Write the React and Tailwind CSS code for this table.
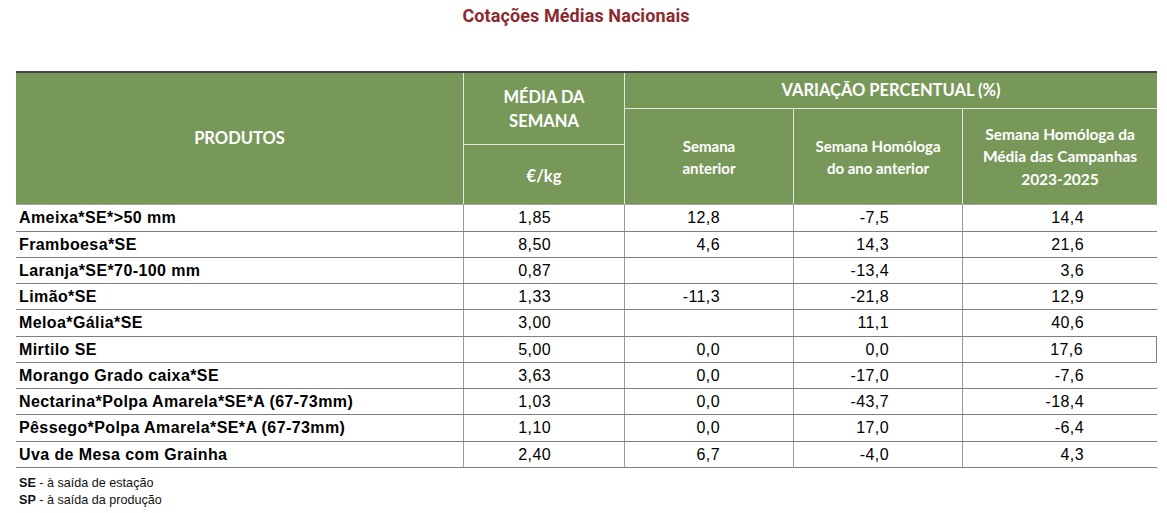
import React from 'react';

const GRID = 'grid grid-cols-[447px_161px_169px_169px_195px]';

const LINHAS = [
  { nome: 'Ameixa*SE*>50 mm', media: '1,85', ant: '12,8', hom: '-7,5', camp: '14,4', alto: true },
  { nome: 'Framboesa*SE', media: '8,50', ant: '4,6', hom: '14,3', camp: '21,6' },
  { nome: 'Laranja*SE*70-100 mm', media: '0,87', ant: '', hom: '-13,4', camp: '3,6' },
  { nome: 'Limão*SE', media: '1,33', ant: '-11,3', hom: '-21,8', camp: '12,9' },
  { nome: 'Meloa*Gália*SE', media: '3,00', ant: '', hom: '11,1', camp: '40,6', alto: true },
  { nome: 'Mirtilo SE', media: '5,00', ant: '0,0', hom: '0,0', camp: '17,6', caixa: true },
  { nome: 'Morango Grado caixa*SE', media: '3,63', ant: '0,0', hom: '-17,0', camp: '-7,6' },
  { nome: 'Nectarina*Polpa Amarela*SE*A (67-73mm)', media: '1,03', ant: '0,0', hom: '-43,7', camp: '-18,4' },
  { nome: 'Pêssego*Polpa Amarela*SE*A (67-73mm)', media: '1,10', ant: '0,0', hom: '17,0', camp: '-6,4', alto: true },
  { nome: 'Uva de Mesa com Grainha', media: '2,40', ant: '6,7', hom: '-4,0', camp: '4,3' },
];

function Num({ children, last, caixa }) {
  return (
    <div className={`flex items-center justify-end pr-[73px] border-l border-[#9a9a9a] text-[16px] tracking-[0.4px] text-black ${last && caixa ? 'border-r border-r-[#7f7f7f]' : ''}`}>
      {children}
    </div>
  );
}

function Cabecalho() {
  return (
    <div className={`${GRID} grid-rows-[35px_36px_60px] bg-[#78985a] border-t-2 border-[#454545] text-white font-bold`}
      style={{ fontFamily: 'Lato, "Open Sans", sans-serif' }}>
      <div className="row-span-3 flex items-center justify-center text-[16.5px]">PRODUTOS</div>
      <div className="row-span-2 flex items-center justify-center text-center text-[16.5px] leading-[24px] border-l border-[#e3e9dc]">
        MÉDIA DA<br />SEMANA
      </div>
      <div className="col-span-3 flex items-center justify-center text-[16.5px] border-l border-[#e3e9dc]">
        VARIAÇÃO PERCENTUAL (%)
      </div>
      <div className="row-span-2 flex items-center justify-center text-center text-[15px] leading-[22px] border-l border-t border-[#e3e9dc]">
        Semana<br />anterior
      </div>
      <div className="row-span-2 flex items-center justify-center text-center text-[15px] leading-[22px] border-l border-t border-[#e3e9dc]">
        Semana Homóloga<br />do ano anterior
      </div>
      <div className="row-span-2 flex items-center justify-center text-center text-[15.5px] leading-[22.5px] border-l border-t border-[#e3e9dc]">
        Semana Homóloga da<br />Média das Campanhas<br />2023-2025
      </div>
      <div className="col-start-2 row-start-3 flex items-center justify-center pt-[4px] text-[16.5px] border-l border-t border-[#e3e9dc]">
        €/kg
      </div>
    </div>
  );
}

export default function App() {
  return (
    <div className="w-[1167px] h-[513px] bg-white overflow-hidden" style={{ fontFamily: '"Liberation Sans", Arial, sans-serif' }}>
      <div className="pr-[15px] pt-[6px] text-center">
        <h1 className="text-[18px] leading-[20px] font-bold text-[#8a2a2f] tracking-[0.1px]"
          style={{ fontFamily: 'Roboto, "Liberation Sans", sans-serif' }}>
          Cotações Médias Nacionais
        </h1>
      </div>

      <div className="ml-[16px] mt-[45px] w-[1141px]">
        <Cabecalho />

        <div className="border-t border-[#a3a3a3]">
          {LINHAS.map(l => (
            <div key={l.nome} className={`${GRID} ${l.alto ? 'h-[27px]' : 'h-[26px]'} border-b border-[#7f7f7f]`}>
              <div className="flex items-center pl-[3px] text-[16px] font-bold tracking-[0.4px] text-black">{l.nome}</div>
              <Num>{l.media}</Num>
              <Num>{l.ant}</Num>
              <Num>{l.hom}</Num>
              <Num last caixa={l.caixa}>{l.camp}</Num>
            </div>
          ))}
        </div>

        <div className="pl-[3px] pt-[7px] text-[12.6px] leading-[17px] text-[#111]">
          <p><b>SE</b> - à saída de estação</p>
          <p><b>SP</b> - à saída da produção</p>
        </div>
      </div>
    </div>
  );
}
